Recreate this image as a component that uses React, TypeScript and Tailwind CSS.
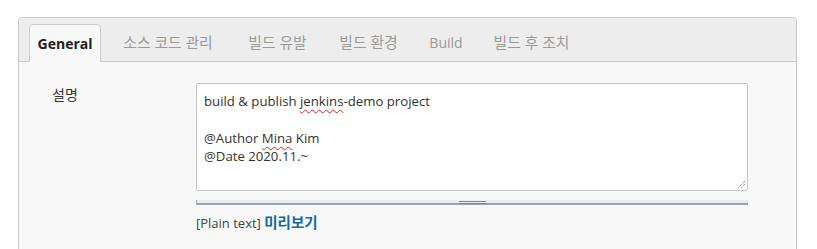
import React from "react";

const latin = "font-['Segoe_UI','Open_Sans','Noto_Sans_CJK_KR',sans-serif]";

const tabs = [
  { label: "소스 코드 관리", w: "w-[122px]", size: "text-[14.8px]" },
  { label: "빌드 유발", w: "w-[97px]", size: "text-[14.8px]" },
  { label: "빌드 환경", w: "w-[85px]", size: "text-[14.8px]" },
  { label: "Build", w: "w-[70px]", size: "text-[14px]" },
  { label: "빌드 후 조치", w: "w-[101px]", size: "text-[14.8px]" },
];

function Wavy({ children }: { children: React.ReactNode }) {
  return (
    <span className="underline decoration-wavy decoration-[#e02020] decoration-1 underline-offset-[3px]">
      {children}
    </span>
  );
}

export default function App() {
  return (
    <div className={`h-[249px] overflow-hidden bg-white pt-[17px] pl-[18px] pr-[20px] ${latin}`}>
      <div className="h-[240px] rounded-t-[4px] border border-[#c9c9c9] bg-[#f8f8f8]">
        {/* tab bar */}
        <div className="flex h-[44px] items-end rounded-t-[4px] border-b border-[#c9c9c9] bg-[#ededed] pl-[10px]">
          <div className="-mb-px flex h-[38px] w-[72px] items-center justify-center rounded-t-[5px] border border-b-0 border-[#cdcdcd] bg-[#f8f8f8] pb-[1px] text-[14px] font-bold text-[#222]">
            General
          </div>
          <div className="w-[6px]" />
          {tabs.map((t) => (
            <div
              key={t.label}
              className={`flex h-[37px] ${t.w} items-center justify-center ${t.size} text-[#9a9a9a]`}
            >
              {t.label}
            </div>
          ))}
        </div>

        {/* content */}
        <div className="flex pt-[21px] pl-[33px]">
          <div className="w-[144px] pt-[1px] text-[14px] text-[#333]">설명</div>
          <div className="flex w-[552px] flex-col">
            <div className="relative h-[108px] rounded-[2px] border border-[#c6c6c6] bg-white pt-[8px] pl-[7px] text-[13.2px] leading-[18.3px] text-[#333]">
              <div>
                build &amp; publish <Wavy>jenkins</Wavy>-demo project
              </div>
              <div>&nbsp;</div>
              <div>
                @Author <Wavy>Mina</Wavy> Kim
              </div>
              <div>@Date 2020.11.~</div>
              <svg
                className="absolute right-[1px] bottom-[1px]"
                width="9"
                height="9"
                viewBox="0 0 9 9"
              >
                <path d="M8 1 L1 8 M8 4 L4 8" stroke="#666" strokeWidth="1" strokeDasharray="1 1" />
              </svg>
            </div>
            <div className="relative mt-[9px] h-[5px] border-b-2 border-l border-[#9aa6ac] bg-[#e8eef0]">
              <div className="absolute left-[262px] top-[1px] h-[1px] w-[27px] bg-[#7e8a84]" />
              <div className="absolute left-[262px] top-[3px] h-[1px] w-[27px] bg-[#7e8a84]" />
            </div>
            <div className="mt-[7px] text-[13px] text-[#444]">
              [Plain text]{" "}
              <span className="text-[14.5px] font-bold text-[#0e6aa5]">미리보기</span>
            </div>
          </div>
        </div>
      </div>
    </div>
  );
}
